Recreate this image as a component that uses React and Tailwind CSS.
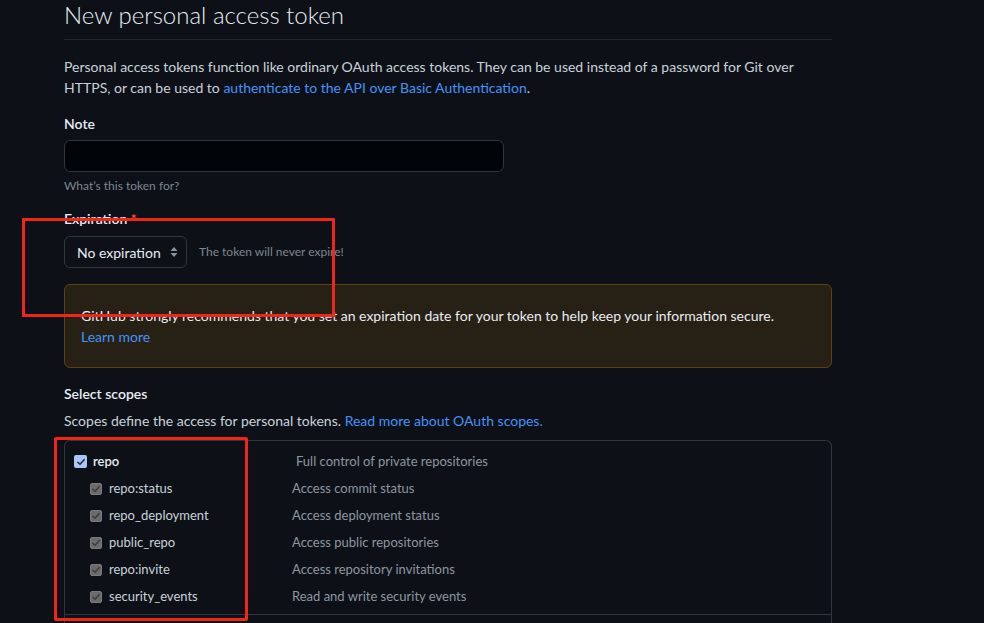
import React from "react";

const scopes = [
  { name: "repo:status", desc: "Access commit status" },
  { name: "repo_deployment", desc: "Access deployment status" },
  { name: "public_repo", desc: "Access public repositories" },
  { name: "repo:invite", desc: "Access repository invitations" },
  { name: "security_events", desc: "Read and write security events" },
];

const Check = ({ main }) => (
  <span
    className={
      main
        ? "w-[13px] h-[13px] rounded-[2px] bg-[#a8c7fa] flex items-center justify-center shrink-0"
        : "w-[12px] h-[12px] rounded-[2px] bg-[#6b6b6b] border border-[#7a7a7a] flex items-center justify-center shrink-0"
    }
  >
    <svg viewBox="0 0 12 12" className="w-[10px] h-[10px]">
      <path
        d="M2.2 6.3 L4.8 8.8 L9.8 3.2"
        fill="none"
        stroke={main ? "#1f2937" : "#3d3d3d"}
        strokeWidth="1.8"
        strokeLinecap="round"
        strokeLinejoin="round"
      />
    </svg>
  </span>
);

export default function App() {
  return (
    <div
      className="relative min-h-screen w-full bg-[#0d1117] text-[#c9d1d9] overflow-hidden"
      style={{ fontFamily: '"Segoe UI", Lato, "Liberation Sans", sans-serif' }}
    >
      <div className="ml-[64px] w-[768px]">
        {/* Header */}
        <h1 className="text-[24px] leading-[30px] font-light text-[#e6edf3] pb-[9px] border-b border-[#21262d]">
          New personal access token
        </h1>

        <p className="mt-[16px] text-[14px] leading-[21px] text-[#c9d1d9]">
          <span className="whitespace-nowrap">
            Personal access tokens function like ordinary OAuth access tokens. They can be used instead of a password for Git over
          </span>
          <br />
          HTTPS, or can be used to{" "}
          <a className="text-[#4493f8]">authenticate to the API over Basic Authentication</a>.
        </p>

        {/* Note */}
        <div className="mt-[15px] text-[14px] leading-[21px] font-semibold text-[#e6edf3]">Note</div>
        <div className="mt-[6px] w-[440px] h-[32px] rounded-[6px] bg-[#010409] border border-[#30363d]" />
        <div className="mt-[5px] text-[12px] leading-[18px] text-[#7d8590]">What’s this token for?</div>

        {/* Expiration */}
        <div className="mt-[13px] text-[14px] leading-[21px] font-semibold text-[#e6edf3]">
          Expiration <span className="text-[#f85149]">*</span>
        </div>
        <div className="mt-[7px] flex items-center">
          <div className="h-[32px] w-[123px] rounded-[6px] bg-[#0d1117] border border-[#30363d] flex items-center pl-[12px] pr-[8px] justify-between">
            <span className="text-[14px] text-[#e6edf3]">No expiration</span>
            <svg viewBox="0 0 8 12" className="w-[8px] h-[12px]">
              <path d="M4 1 L7.5 5 H0.5 Z M4 11 L7.5 7 H0.5 Z" fill="#8b949e" />
            </svg>
          </div>
          <span className="ml-[12px] text-[12px] text-[#7d8590]">The token will never expire!</span>
        </div>

        {/* Warning */}
        <div className="mt-[16px] rounded-[6px] border border-[#5c4412] bg-[#272115] px-[16px] py-[20px] text-[14px] leading-[21px]">
          <div className="text-[#e6edf3]">
            GitHub strongly recommends that you set an expiration date for your token to help keep your information secure.
          </div>
          <a className="text-[#4493f8]">Learn more</a>
        </div>

        {/* Scopes */}
        <div className="mt-[15px] text-[14px] leading-[21px] font-semibold text-[#e6edf3]">Select scopes</div>
        <p className="mt-[6px] text-[14px] leading-[21px]">
          Scopes define the access for personal tokens.{" "}
          <a className="text-[#4493f8]">Read more about OAuth scopes.</a>
        </p>

        <div className="mt-[9px] rounded-t-[6px] border border-b-0 border-[#30363d] h-[200px]">
          <div className="pt-[7px] pb-[4px] border-b border-[#30363d]">
            <div className="flex items-center h-[27px] pl-[9px]">
              <div className="flex items-center gap-[6px] w-[222px]">
                <Check main />
                <span className="text-[13px] font-semibold text-[#e6edf3]">repo</span>
              </div>
              <span className="text-[13px] text-[#8d96a0]">Full control of private repositories</span>
            </div>
            {scopes.map((s) => (
              <div key={s.name} className="flex items-center h-[27px] pl-[25px]">
                <div className="flex items-center gap-[7px] w-[202px]">
                  <Check />
                  <span className="text-[13px] text-[#c9d1d9]">{s.name}</span>
                </div>
                <span className="text-[13px] text-[#8d96a0]">{s.desc}</span>
              </div>
            ))}
          </div>
        </div>
      </div>

      {/* annotation boxes */}
      <div className="absolute left-[22px] top-[218px] w-[313px] h-[99px] border-[3px] border-[#f0261b] pointer-events-none" />
      <div className="absolute left-[54px] top-[437px] w-[194px] h-[184px] border-[3px] border-[#f0261b] rounded-[2px] pointer-events-none" />
    </div>
  );
}
